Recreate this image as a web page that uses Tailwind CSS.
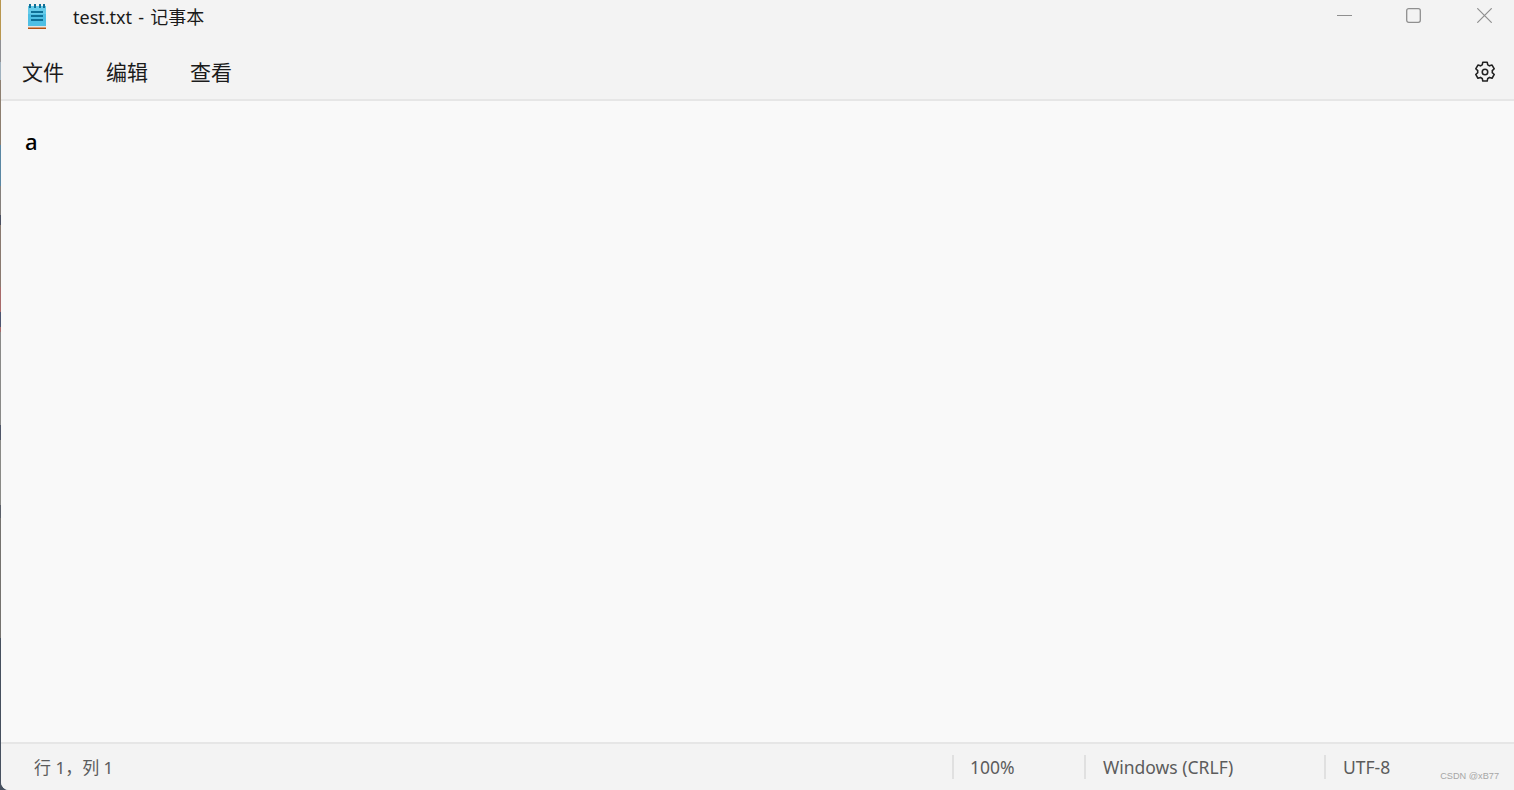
<!DOCTYPE html>
<html lang="zh-CN">

<head>
  <meta charset="UTF-8">
  <meta name="viewport" content="width=device-width, initial-scale=1.0">
  <title>test.txt - 记事本</title>
  <script src="https://cdn.jsdelivr.net/npm/@tailwindcss/browser@4"></script>
</head>

<body class="bg-[#46505f] overflow-hidden font-['Noto_Sans','Noto_Sans_CJK_SC',sans-serif]">
  <div class="flex w-[1514px] h-[790px]">
    <!-- desktop peeking out on the left edge -->
    <div class="flex flex-col w-px shrink-0">
      <div class="h-[40px] bg-[#b8964e]"></div>
      <div class="h-[22px] bg-[#8f8f92]"></div>
      <div class="h-[18px] bg-[#9fb0bc]"></div>
      <div class="h-[65px] bg-[#8d7f70]"></div>
      <div class="h-[41px] bg-[#5a87a3]"></div>
      <div class="h-[29px] bg-[#85807c]"></div>
      <div class="h-[10px] bg-[#4a4f60]"></div>
      <div class="h-[62px] bg-[#8a7a70]"></div>
      <div class="h-[25px] bg-[#a86a6a]"></div>
      <div class="h-[15px] bg-[#4d5570]"></div>
      <div class="h-[5px] bg-[#a86a6a]"></div>
      <div class="h-[93px] bg-[#8a8a88]"></div>
      <div class="h-[15px] bg-[#4f5668]"></div>
      <div class="h-[65px] bg-[#8a8a86]"></div>
      <div class="h-[13px] bg-[#5a5f68]"></div>
      <div class="h-[120px] bg-[#75736f]"></div>
      <div class="flex-1 bg-[#46505f]"></div>
    </div>

    <div class="flex-1 flex flex-col min-w-0 rounded-bl-lg overflow-hidden bg-[#f9f9f9]">
      <!-- title bar -->
      <div class="h-[33px] bg-[#f3f3f3] flex items-center shrink-0">
        <svg class="ml-[25px] mt-[-1px]" width="22" height="26" viewBox="0 0 22 26">
          <rect x="2" y="3" width="18" height="20" fill="#4fbfe4"/>
          <rect x="2" y="3" width="18" height="8" fill="#66cbe9"/>
          <rect x="2" y="23" width="18" height="1.5" fill="#e8e4de"/>
          <rect x="2" y="24.5" width="18" height="2" fill="#b5500f"/>
          <rect x="3" y="1" width="2" height="4" fill="#0f6f96"/>
          <rect x="8" y="1" width="2" height="4" fill="#0f6f96"/>
          <rect x="13" y="1" width="2" height="4" fill="#0f6f96"/>
          <rect x="17" y="1" width="2" height="4" fill="#0f6f96"/>
          <rect x="5" y="8" width="12" height="2" fill="#0e7097"/>
          <rect x="5" y="12" width="12" height="2" fill="#0e7097"/>
          <rect x="5" y="16" width="12" height="2" fill="#0e7097"/>
        </svg>
        <span class="ml-[25px] text-[18px] text-[#1a1a1a] leading-none mt-[1px] [word-spacing:1.5px]">test.txt - 记事本</span>
        <div class="ml-auto flex items-center mr-[22px] mt-[-3px]">
          <svg width="15" height="15" viewBox="0 0 15 15" fill="none" stroke="#8f8f8f"><path d="M0 7.5H15"/></svg>
          <svg class="ml-[54px]" width="15" height="15" viewBox="0 0 15 15" fill="none" stroke="#8f8f8f" stroke-width="1.3"><rect x="0.7" y="0.7" width="13.6" height="13.6" rx="2"/></svg>
          <svg class="ml-[56px]" width="15" height="15" viewBox="0 0 15 15" fill="none" stroke="#8f8f8f" stroke-width="1.2"><path d="M0.3 0.3L14.7 14.7M14.7 0.3L0.3 14.7"/></svg>
        </div>
      </div>

      <!-- menu bar -->
      <div class="h-[68px] bg-[#f3f3f3] border-b-2 border-[#e6e6e6] flex items-center shrink-0 pt-[12px]">
        <div class="ml-[21px] flex gap-[42px] text-[21px] text-[#1b1b1b] leading-none">
          <span>文件</span>
          <span>编辑</span>
          <span>查看</span>
        </div>
        <svg class="ml-auto mr-[18px] mt-[-1px]" width="22" height="22" viewBox="0 0 24 24" fill="none" stroke="#222" stroke-width="1.7" stroke-linejoin="round">
          <path d="M9.6 2.3 h4.8 l0.6 2.9 a7.4 7.4 0 0 1 1.9 1.1 l2.8 -0.9 2.4 4.1 -2.2 2 a7.4 7.4 0 0 1 0 2.2 l2.2 2 -2.4 4.1 -2.8 -0.9 a7.4 7.4 0 0 1 -1.9 1.1 l-0.6 2.9 h-4.8 l-0.6 -2.9 a7.4 7.4 0 0 1 -1.9 -1.1 l-2.8 0.9 -2.4 -4.1 2.2 -2 a7.4 7.4 0 0 1 0 -2.2 l-2.2 -2 2.4 -4.1 2.8 0.9 a7.4 7.4 0 0 1 1.9 -1.1 z" transform="translate(0 -1)"/>
          <circle cx="12" cy="12" r="3"/>
        </svg>
      </div>

      <!-- editor -->
      <div class="flex-1 bg-[#f9f9f9] pl-[24px] pt-[25px] text-[22px] leading-[30px] text-black font-medium">a</div>

      <!-- status bar -->
      <div class="h-[48px] bg-[#f3f3f3] border-t-2 border-[#e6e6e6] flex items-center shrink-0 text-[17.5px] text-[#5c5c5c] leading-none relative">
        <span class="ml-[33px] w-[918px] text-[17px]">行 1，列 1</span>
        <div class="w-[132px] h-[24px] border-l-2 border-[#e0e0e0] pl-[16px] pt-[2px] flex items-center">100%</div>
        <div class="w-[240px] h-[24px] border-l-2 border-[#e0e0e0] pl-[17px] pt-[2px] flex items-center">Windows (CRLF)</div>
        <div class="h-[24px] border-l-2 border-[#e0e0e0] pl-[17px] pt-[2px] flex items-center">UTF-8</div>
        <span class="absolute right-[15px] bottom-[9px] text-[9.2px] text-[#a6a6a6] font-['Liberation_Sans',sans-serif]">CSDN @xB77</span>
      </div>
    </div>
  </div>
</body>

</html>
